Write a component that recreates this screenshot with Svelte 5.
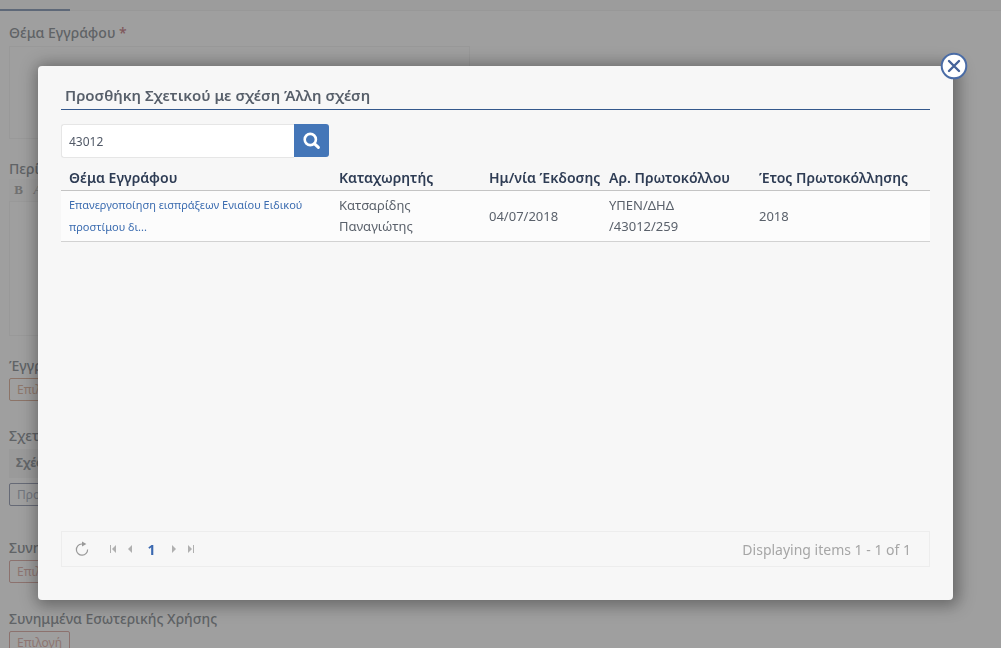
<script lang="ts">
  let query = '43012';
  let open = true;

  const rows = [
    {
      subject: 'Επανεργοποίηση εισπράξεων Ενιαίου Ειδικού προστίμου δι...',
      author: 'Κατσαρίδης Παναγιώτης',
      issued: '04/07/2018',
      protocol: ['ΥΠΕΝ/ΔΗΔ', '/43012/259'],
      year: '2018'
    }
  ];

  function close() {
    open = false;
  }
</script>

<main class="page">
  <div class="tabs"><span class="active-tab"></span></div>

  <form class="form">
    <div class="field subject">
      <label for="subject">Θέμα Εγγράφου <em>*</em></label>
      <textarea id="subject"></textarea>
    </div>

    <div class="field summary">
      <label for="summary">Περίληψη</label>
      <div class="toolbar">
        <button type="button"><b>B</b></button>
        <button type="button"><i>A</i></button>
      </div>
      <textarea id="summary"></textarea>
    </div>

    <div class="field document">
      <h4>Έγγραφο</h4>
      <button type="button" class="pick">Επιλογή</button>
    </div>

    <div class="field related">
      <h4>Σχετικά</h4>
      <div class="related-head">Σχέση</div>
      <button type="button" class="pick add">Προσθήκη</button>
    </div>

    <div class="field attachments">
      <h4>Συνημμένα</h4>
      <button type="button" class="pick red">Επιλογή</button>
    </div>

    <div class="field">
      <h4>Συνημμένα Εσωτερικής Χρήσης</h4>
      <button type="button" class="pick red">Επιλογή</button>
    </div>
  </form>
</main>

{#if open}
  <div class="overlay">
    <div class="dialog" role="dialog" aria-labelledby="dialog-title">
      <button class="close" on:click={close} aria-label="Κλείσιμο">
        <svg viewBox="0 0 28 28" width="28" height="28">
          <circle cx="14" cy="14" r="12.3" fill="#fff" stroke="#4a6ca6" stroke-width="2" />
          <path d="M9 9l10 10M19 9L9 19" stroke="#45639a" stroke-width="2.4" stroke-linecap="round" />
        </svg>
      </button>

      <h2 id="dialog-title">Προσθήκη Σχετικού με σχέση Άλλη σχέση</h2>

      <div class="search">
        <input type="text" bind:value={query} aria-label="Αναζήτηση" />
        <button aria-label="Αναζήτηση">
          <svg viewBox="0 0 18 18" width="18" height="18" fill="none" stroke="#fff">
            <circle cx="7.3" cy="7.5" r="5.6" stroke-width="2.6" />
            <path d="M11.6 11.8l3.8 3.6" stroke-width="3" stroke-linecap="round" />
          </svg>
        </button>
      </div>

      <table>
        <colgroup>
          <col class="c-subject" />
          <col class="c-author" />
          <col class="c-issued" />
          <col class="c-protocol" />
          <col />
        </colgroup>
        <thead>
          <tr>
            <th>Θέμα Εγγράφου</th>
            <th>Καταχωρητής</th>
            <th>Ημ/νία Έκδοσης</th>
            <th>Αρ. Πρωτοκόλλου</th>
            <th>Έτος Πρωτοκόλλησης</th>
          </tr>
        </thead>
        <tbody>
          {#each rows as row}
            <tr>
              <td class="subject-cell"><a href="#document">{row.subject}</a></td>
              <td>{row.author}</td>
              <td>{row.issued}</td>
              <td>{row.protocol[0]}<wbr />{row.protocol[1]}</td>
              <td>{row.year}</td>
            </tr>
          {/each}
        </tbody>
      </table>

      <div class="pager">
        <button class="refresh" aria-label="Refresh">
          <svg viewBox="0 0 16 16" width="16" height="16">
            <path d="M9.5 3H7.6a5.6 5.6 0 1 0 6 5.4" fill="none" stroke="#999" stroke-width="1.2" />
            <path d="M8 0.6v5L12.4 3z" fill="#999" />
          </svg>
        </button>
        <button aria-label="First page">
          <svg viewBox="0 0 8 8" width="8" height="8"><path d="M1 0h1v8H1zM7 0v8L3 4z" /></svg>
        </button>
        <button aria-label="Previous page">
          <svg viewBox="0 0 8 8" width="8" height="8"><path d="M6 0v8L2 4z" /></svg>
        </button>
        <span class="current">1</span>
        <button aria-label="Next page">
          <svg viewBox="0 0 8 8" width="8" height="8"><path d="M2 0v8l4-4z" /></svg>
        </button>
        <button aria-label="Last page">
          <svg viewBox="0 0 8 8" width="8" height="8"><path d="M6 0h1v8H6zM1 0v8l4-4z" /></svg>
        </button>
        <span class="info">Displaying items 1 - 1 of 1</span>
      </div>
    </div>
  </div>
{/if}

<style>
  :global(body) {
    background: #fefefe;
    font-family: 'Noto Sans', 'Open Sans', sans-serif;
  }

  .page {
    height: 100vh;
    overflow: hidden;
  }

  button,
  input,
  textarea {
    font-family: inherit;
    box-sizing: border-box;
  }

  .tabs {
    height: 10px;
    background: #f8f8f8;
    border-bottom: 1px solid #f0f0f0;
  }

  .active-tab {
    display: block;
    width: 70px;
    height: 11px;
    box-sizing: border-box;
    border-bottom: 2px solid #7c90b0;
  }

  .form {
    padding: 12px 9px 0;
  }

  .field label,
  .field h4 {
    display: block;
    margin: 0;
    font-size: 14px;
    font-weight: 500;
    line-height: 20px;
    color: #80868c;
  }

  .field em {
    font-style: normal;
    color: #c07078;
  }

  .field textarea {
    display: block;
    width: 461px;
    max-width: 100%;
    background: #fefefe;
    border: 1px solid #f2f2f2;
    resize: none;
  }

  .subject {
    margin-bottom: 20px;
  }

  .subject textarea {
    height: 93px;
    margin-top: 3px;
  }

  .summary {
    margin-bottom: 20px;
  }

  .summary textarea {
    height: 135px;
  }

  .toolbar {
    display: flex;
    width: 461px;
    height: 22px;
    background: #fafafa;
  }

  .toolbar button {
    width: 19px;
    padding: 0;
    border: none;
    background: none;
    font: 13px 'Liberation Serif', serif;
    color: #a0a0a0;
  }

  .pick {
    height: 23px;
    margin-top: 2px;
    padding: 0 7px;
    border: 1px solid #d8a890;
    border-radius: 2px;
    background: #fefefe;
    font-size: 12px;
    color: #dcb098;
  }

  .pick.red {
    border-color: #d8a49c;
    color: #dcaca4;
  }

  .pick.add {
    margin-top: 5px;
    border-color: #8c94ac;
    color: #a4acbc;
  }

  .document {
    margin-bottom: 25px;
  }

  .related {
    margin-bottom: 32px;
  }

  .related-head {
    width: 461px;
    height: 29px;
    margin-top: 3px;
    padding-left: 7px;
    box-sizing: border-box;
    background: #f5f5f5;
    font-size: 12px;
    font-weight: 700;
    line-height: 28px;
    color: #888e94;
  }

  .attachments {
    margin-bottom: 26px;
  }

  .overlay {
    position: fixed;
    inset: 0;
    display: flex;
    padding: 66px 48px 48px 38px;
    background: rgba(64, 64, 64, 0.5);
  }

  .dialog {
    position: relative;
    flex: 1;
    display: flex;
    flex-direction: column;
    min-width: 0;
    padding: 16px 23px 33px;
    border-radius: 4px;
    background: #f7f7f7;
    box-shadow: 2px 2px 16px 4px rgba(0, 0, 0, 0.35);
  }

  .close {
    position: absolute;
    top: -14px;
    right: -15px;
    width: 28px;
    height: 28px;
    padding: 0;
    border: none;
    background: none;
    cursor: pointer;
  }

  h2 {
    margin: 0 0 14px;
    padding: 0 4px;
    border-bottom: 1px solid #34588c;
    font-size: 15px;
    font-weight: 600;
    line-height: 27px;
    color: #575f6a;
  }

  .search {
    display: flex;
    margin-bottom: 9px;
  }

  .search input {
    width: 233px;
    height: 34px;
    padding: 0 7px;
    border: 1px solid #e6e6e6;
    border-right: none;
    border-radius: 3px 0 0 3px;
    background: #fff;
    font-size: 12px;
    color: #515967;
  }

  .search button {
    display: grid;
    place-items: center;
    width: 35px;
    height: 33px;
    padding: 0;
    border: none;
    border-radius: 0 3px 3px 0;
    background: #4476b8;
  }

  table {
    width: 100%;
    table-layout: fixed;
    border-collapse: collapse;
    font-size: 13px;
    line-height: 21px;
    color: #5a616b;
  }

  .c-subject {
    width: 270px;
  }

  .c-author,
  .c-protocol {
    width: 150px;
  }

  .c-issued {
    width: 120px;
  }

  th {
    padding: 0 0 2px 8px;
    border-bottom: 1px solid #c4c4c4;
    font-size: 14px;
    font-weight: 600;
    text-align: left;
    white-space: nowrap;
    color: #2e3c54;
  }

  td {
    padding: 4px 32px 4px 8px;
    border-bottom: 1px solid #d2d2d2;
    background: #fcfcfc;
  }

  .subject-cell {
    padding: 3px 16px 3px 8px;
    font-size: 11px;
    line-height: 22px;
  }

  td a {
    color: #3b6cb0;
    text-decoration: none;
  }

  .pager {
    display: flex;
    align-items: center;
    margin-top: auto;
    height: 34px;
    padding: 0 18px 0 11px;
    border: 1px solid #ededed;
    font-size: 14px;
    color: #a6a6a6;
  }

  .pager button {
    display: grid;
    place-items: center;
    width: 17px;
    height: 20px;
    padding: 0;
    border: none;
    background: none;
    fill: #b0b0b0;
  }

  .pager .refresh {
    margin-right: 14px;
  }

  .current {
    width: 27px;
    font-weight: 700;
    text-align: center;
    color: #3a68b0;
  }

  .info {
    margin-left: auto;
  }
</style>
